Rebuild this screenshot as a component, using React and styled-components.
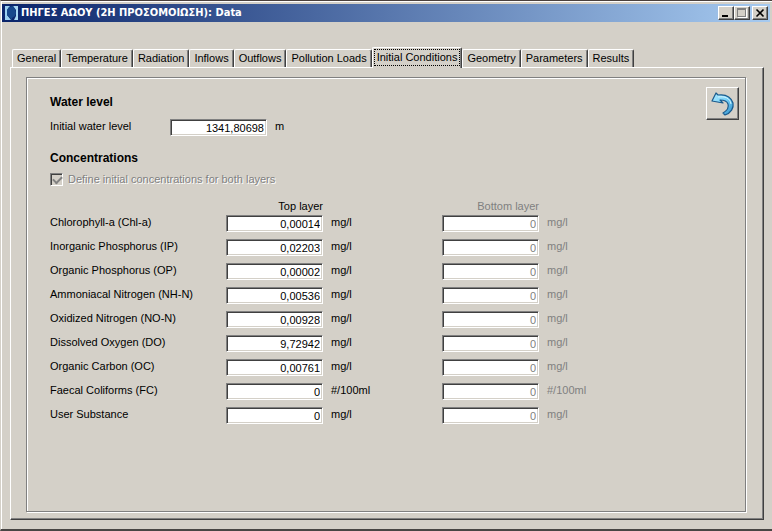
import React, { useState } from "react";
import styled, { createGlobalStyle, css } from "styled-components";

const GlobalStyle = createGlobalStyle`
  * {
    box-sizing: border-box;
  }

  body {
    margin: 0;
    background: #d4d0c8;
    color: #000;
    font: 11px/16px "Liberation Sans", Arial, sans-serif;
  }

  button,
  input {
    font: inherit;
    color: inherit;
  }
`;

const Window = styled.main`
  display: flex;
  flex-direction: column;
  min-height: 100vh;
  padding: 3px 2px 0 1px;
  border-top: 1px solid #4a403c;
  border-bottom: 2px solid #484644;
  border-left: 1px solid #d4d0c8;
  background: #d4d0c8;
  box-shadow: inset 1px 1px 0 #fff;
`;

const TitleBar = styled.header`
  display: flex;
  align-items: center;
  height: 18px;
  padding: 0 2px;
  background: linear-gradient(90deg, #0a246a, #a6caf0);
`;

const Title = styled.h1`
  flex: 1;
  margin: 0 0 0 2px;
  color: #fff;
  font: bold 11px/18px "DejaVu Sans Condensed", "DejaVu Sans", sans-serif;
  white-space: nowrap;
`;

const raised = css`
  border: 1px solid;
  border-color: #fff #404040 #404040 #fff;
  box-shadow: inset -1px -1px 0 #808080;
  background: #d4d0c8;
`;

const CaptionButton = styled.button`
  ${raised}
  display: flex;
  width: 16px;
  height: 14px;
  padding: 0;
  margin-left: ${(props) => (props.$spaced ? "2px" : "0")};
`;

const TabStrip = styled.nav`
  display: flex;
  align-items: flex-end;
  height: 45px;
  padding-left: 10px;
`;

const Tab = styled.button`
  position: relative;
  height: 18px;
  padding: 0 4px;
  border: 1px solid #fff;
  border-right: 1px solid #404040;
  border-bottom: 0;
  border-radius: 2px 2px 0 0;
  box-shadow: inset -1px 0 0 #808080;
  background: #d4d0c8;
  line-height: 17px;
  white-space: nowrap;

  ${(props) =>
    props.$active &&
    css`
      z-index: 1;
      height: 21px;
      padding: 1px 1px 2px;
      margin-bottom: -1px;
    `}
`;

const FocusBox = styled.span`
  display: block;
  padding: 0 2px;
  border: 1px dotted #000;
  line-height: 15px;
`;

const Panel = styled.section`
  display: flex;
  flex: 1;
  margin: 0 6px 9px 8px;
  padding: 9px 17px 7px 15px;
  ${raised}
`;

const Group = styled.div`
  display: flex;
  flex: 1;
  align-items: flex-start;
  justify-content: space-between;
  padding: 9px 6px 8px 23px;
  border: 1px solid #808080;
  box-shadow: inset 1px 1px 0 #fff, 1px 1px 0 #fff;
`;

const Form = styled.form`
  padding-top: 7px;
`;

const Heading = styled.h2`
  margin: 0;
  font-size: 12px;
  line-height: 16px;
`;

const Row = styled.div`
  display: grid;
  grid-template-columns: ${(props) =>
    props.$single ? "120px 97px 1fr" : "176px 97px 119px 97px 1fr"};
  align-items: start;
  height: 24px;
`;

const WaterRow = styled.div`
  padding: 8px 0;
`;

const HeaderRow = styled(Row)`
  height: 16px;
  margin-top: 11px;
`;

const ColumnTitle = styled.span`
  grid-column: ${(props) => props.$column};
  color: ${(props) => (props.$disabled ? "#808080" : "#000")};
  text-align: right;
`;

const Field = styled.input`
  width: 97px;
  height: 17px;
  margin-top: 1px;
  padding: 1px 2px 0;
  border: 1px solid;
  border-color: #808080 #fff #fff #808080;
  border-radius: 0;
  box-shadow: inset 1px 1px 0 #404040, inset -1px -1px 0 #d4d0c8;
  background: #fff;
  text-align: right;
  outline: 0;

  &:disabled {
    color: #808080;
  }
`;

const Unit = styled.span`
  padding-left: 8px;
  color: ${(props) => (props.$disabled ? "#808080" : "#000")};
`;

const CheckLabel = styled.label`
  display: flex;
  align-items: center;
  gap: 5px;
  margin-top: 5px;
  color: #808080;
  text-shadow: 1px 1px 0 #fff;
`;

const Check = styled.input`
  appearance: none;
  width: 13px;
  height: 13px;
  margin: 0;
  border: 1px solid;
  border-color: #808080 #fff #fff #808080;
  box-shadow: inset 1px 1px 0 #404040;
  background: #d4d0c8;

  &:checked::after {
    content: "";
    display: block;
    width: 7px;
    height: 4px;
    margin: 2px;
    border: solid #808080;
    border-width: 0 0 2px 2px;
    transform: rotate(-45deg);
  }
`;

const UndoButton = styled.button`
  ${raised}
  display: flex;
  align-items: center;
  justify-content: center;
  width: 33px;
  height: 33px;
  padding: 0;
`;

const tabs = [
  "General",
  "Temperature",
  "Radiation",
  "Inflows",
  "Outflows",
  "Pollution Loads",
  "Initial Conditions",
  "Geometry",
  "Parameters",
  "Results",
];

const substances = [
  { id: "chl", name: "Chlorophyll-a (Chl-a)", top: "0,00014", unit: "mg/l" },
  { id: "ip", name: "Inorganic Phosphorus (IP)", top: "0,02203", unit: "mg/l" },
  { id: "op", name: "Organic Phosphorus (OP)", top: "0,00002", unit: "mg/l" },
  { id: "nh", name: "Ammoniacal Nitrogen (NH-N)", top: "0,00536", unit: "mg/l" },
  { id: "no", name: "Oxidized Nitrogen (NO-N)", top: "0,00928", unit: "mg/l" },
  { id: "do", name: "Dissolved Oxygen (DO)", top: "9,72942", unit: "mg/l" },
  { id: "oc", name: "Organic Carbon (OC)", top: "0,00761", unit: "mg/l" },
  { id: "fc", name: "Faecal Coliforms (FC)", top: "0", unit: "#/100ml" },
  { id: "us", name: "User Substance", top: "0", unit: "mg/l" },
];

function AppIcon() {
  return (
    <svg width="15" height="14" viewBox="0 0 15 14">
      <path d="M1 0h5L3 4v5l4 5H1z" fill="#9cd0f0" />
      <path d="M9 0h5v14h-4l2-4V4z" fill="#a8d8f4" />
      <path d="M5 1l4-1 2 3 1 4-1 3-3 2v2L6 12 3 9V4z" fill="#17488c" />
    </svg>
  );
}

function UndoIcon() {
  return (
    <svg width="24" height="24" viewBox="0 0 24 24">
      <defs>
        <linearGradient id="arrow" x1="0" y1="0" x2="1" y2="1">
          <stop offset="0" stopColor="#b4ecff" />
          <stop offset="0.5" stopColor="#74d0f8" />
          <stop offset="1" stopColor="#2f8cc8" />
        </linearGradient>
      </defs>
      <path
        d="M1 9L5 1l2 2c8-1 13 2 15 8 1 5-2 10-8 12l-2-2c5-3 6-6 5-9-1-3-4-4-8-4l3 3z"
        fill="url(#arrow)"
        stroke="#1a5a8c"
        strokeWidth="1.2"
        strokeLinejoin="round"
      />
      <path d="M7 5c7-1 12 1 13 7" fill="none" stroke="#d4f6ff" />
    </svg>
  );
}

function Concentration({ id, name, top, unit }) {
  return (
    <Row>
      <label htmlFor={id}>{name}</label>
      <Field id={id} defaultValue={top} />
      <Unit>{unit}</Unit>
      <Field aria-label={`${name}, bottom layer`} defaultValue="0" disabled />
      <Unit $disabled>{unit}</Unit>
    </Row>
  );
}

export default function App() {
  const [active, setActive] = useState("Initial Conditions");

  return (
    <>
      <GlobalStyle />
      <Window>
        <TitleBar>
          <AppIcon />
          <Title>ΠΗΓΕΣ ΑΩΟΥ (2Η ΠΡΟΣΟΜΟΙΩΣΗ): Data</Title>
          <CaptionButton aria-label="Minimize">
            <svg width="14" height="12" shapeRendering="crispEdges">
              <path d="M3 8h6v2H3z" />
            </svg>
          </CaptionButton>
          <CaptionButton aria-label="Maximize" disabled>
            <svg width="14" height="12" shapeRendering="crispEdges">
              <path d="M3 2h9v9H3z" fill="#fff" />
              <path d="M2 1h9v9H2z" fill="#808080" />
              <path d="M3 3h7v6H3z" fill="#d4d0c8" />
            </svg>
          </CaptionButton>
          <CaptionButton aria-label="Close" $spaced>
            <svg width="14" height="12">
              <path d="M3.5 2.5l7 7m0-7l-7 7" stroke="#000" strokeWidth="1.6" />
            </svg>
          </CaptionButton>
        </TitleBar>

        <TabStrip>
          {tabs.map((tab) => (
            <Tab
              key={tab}
              $active={tab === active}
              onClick={() => setActive(tab)}
            >
              {tab === active ? <FocusBox>{tab}</FocusBox> : tab}
            </Tab>
          ))}
        </TabStrip>

        <Panel>
          <Group>
            <Form>
              <Heading>Water level</Heading>
              <WaterRow>
                <Row $single>
                  <label htmlFor="level">Initial water level</label>
                  <Field id="level" defaultValue="1341,80698" />
                  <Unit>m</Unit>
                </Row>
              </WaterRow>
              <Heading>Concentrations</Heading>
              <CheckLabel>
                <Check type="checkbox" defaultChecked disabled />
                Define initial concentrations for both layers
              </CheckLabel>
              <HeaderRow>
                <ColumnTitle $column={2}>Top layer</ColumnTitle>
                <ColumnTitle $column={4} $disabled>
                  Bottom layer
                </ColumnTitle>
              </HeaderRow>
              {substances.map((item) => (
                <Concentration key={item.id} {...item} />
              ))}
            </Form>
            <UndoButton aria-label="Undo">
              <UndoIcon />
            </UndoButton>
          </Group>
        </Panel>
      </Window>
    </>
  );
}
